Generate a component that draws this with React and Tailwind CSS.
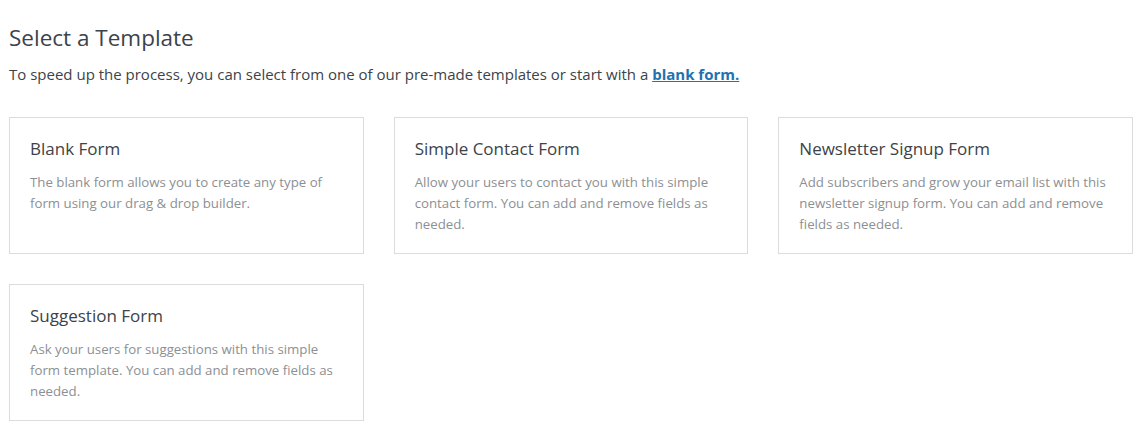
const TEMPLATES = [
  {
    title: "Blank Form",
    desc: "The blank form allows you to create any type of form using our drag & drop builder.",
  },
  {
    title: "Simple Contact Form",
    desc: "Allow your users to contact you with this simple contact form. You can add and remove fields as needed.",
  },
  {
    title: "Newsletter Signup Form",
    desc: "Add subscribers and grow your email list with this newsletter signup form. You can add and remove fields as needed.",
  },
  {
    title: "Suggestion Form",
    desc: "Ask your users for suggestions with this simple form template. You can add and remove fields as needed.",
  },
];

function TemplateCard({ title, desc }) {
  return (
    <div className="h-[137px] border border-[#dcdcde] bg-white px-5 pt-[19px]">
      <h3 className="text-[17px] leading-[24px] text-[#3c434a]">{title}</h3>
      <p className="mt-[11px] text-[13.25px] leading-[21px] text-[#8c8f94]">{desc}</p>
    </div>
  );
}

export default function App() {
  return (
    <div
      className="min-h-[447px] bg-white pl-[9px] pr-[14px] pt-[22px]"
      style={{ fontFamily: '"Open Sans", "Noto Sans", sans-serif' }}
    >
      <h1 className="text-[22.5px] leading-[32px] text-[#3c434a]">Select a Template</h1>
      <p className="mt-[9px] text-[15px] leading-[22px] text-[#3c434a]">
        To speed up the process, you can select from one of our pre-made templates or start with a{" "}
        <a href="#" className="font-bold text-[#2271b1] underline">
          blank form.
        </a>
      </p>
      <div className="mt-[32px] grid grid-cols-3 gap-x-[30px] gap-y-[30px]">
        {TEMPLATES.map((t) => (
          <TemplateCard key={t.title} title={t.title} desc={t.desc} />
        ))}
      </div>
    </div>
  );
}
